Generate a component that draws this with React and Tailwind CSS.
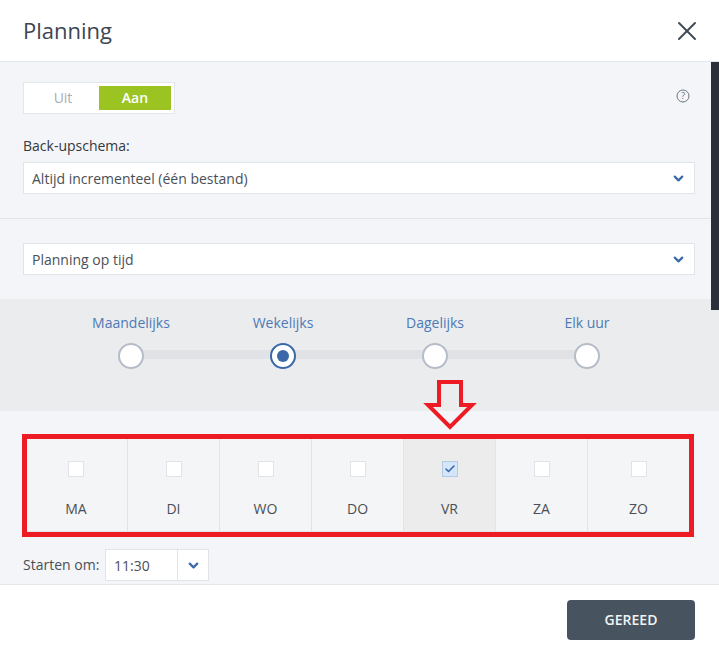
import { X, ChevronDown, Check } from "lucide-react";

const font = { fontFamily: '"Open Sans", sans-serif' };

const frequencies = [
  { label: "Maandelijks", selected: false },
  { label: "Wekelijks", selected: true },
  { label: "Dagelijks", selected: false },
  { label: "Elk uur", selected: false },
];

const days = [
  { label: "MA", width: "w-[101px] pr-[2px]" },
  { label: "DI", width: "w-[92px]" },
  { label: "WO", width: "w-[92px]" },
  { label: "DO", width: "w-[92px]" },
  { label: "VR", width: "w-[92px]", checked: true },
  { label: "ZA", width: "w-[92px]" },
  { label: "ZO", width: "flex-1" },
];

function Chevron() {
  return <ChevronDown size={15} strokeWidth={3.5} className="text-[#3b6aa8]" />;
}

function SelectBox({ value }) {
  return (
    <div className="flex h-8 items-center justify-between border border-[#e1e4e8] bg-white pl-2 pr-2 text-sm text-[#4a4f55]">
      <span className="pt-px">{value}</span>
      <Chevron />
    </div>
  );
}

export default function App() {
  return (
    <div className="relative flex h-[654px] w-[719px] flex-col overflow-hidden bg-white" style={font}>
      <header className="flex h-[62px] shrink-0 items-center justify-between border-b border-[#e1e6ed] pl-[23px] pr-4">
        <h1 className="text-[22px] text-[#3d4651]">Planning</h1>
        <X size={32} strokeWidth={1.5} className="text-[#3f4a57]" />
      </header>

      <main className="flex h-[522px] shrink-0 flex-col bg-[#f3f5f8]">
        <section className="h-[157px] shrink-0 border-b border-[#e1e4e8] pl-[23px] pr-6 pt-5">
          <div className="flex items-start justify-between pr-[5px]">
            <div className="flex h-8 w-[152px] border border-[#e3e6ea] bg-white p-[3px]">
              <span className="flex w-[72px] items-center justify-center text-sm text-[#a8acb3]">Uit</span>
              <span className="flex w-[72px] items-center justify-center bg-[#9bc423] text-sm font-semibold text-white">Aan</span>
            </div>
            <svg width="14" height="14" viewBox="0 0 14 14" className="mt-[7px] text-[#6b7480]">
              <circle cx="7" cy="7" r="6" fill="none" stroke="currentColor" />
              <text x="7" y="10.4" textAnchor="middle" fontSize="9.5" fill="currentColor" style={font}>?</text>
            </svg>
          </div>
          <div className="mt-[21px] pb-[5px] text-sm leading-[22px] text-[#33383e]">Back-upschema:</div>
          <SelectBox value="Altijd incrementeel (één bestand)" />
        </section>

        <section className="h-[80px] shrink-0 pl-[23px] pr-6 pt-6">
          <SelectBox value="Planning op tijd" />
        </section>

        <section className="h-[112px] shrink-0 bg-[#ebecee] pt-[14px]">
          <div className="relative ml-[55px] flex w-[608px]">
            <div className="absolute left-[76px] right-[76px] top-[37px] h-[9px] bg-[#e1e2e5]" />
            {frequencies.map((f) => (
              <div key={f.label} className="relative flex w-[152px] flex-col items-center">
                <span className="text-sm leading-5 text-[#4d7ab5]">{f.label}</span>
                <span
                  className={`mt-[10px] flex h-[26px] w-[26px] items-center justify-center rounded-full border-2 bg-white ${
                    f.selected ? "border-[#3a68a8]" : "border-[#b5bdc7]"
                  }`}
                >
                  {f.selected && <span className="h-3 w-3 rounded-full bg-[#3a68a8]" />}
                </span>
              </div>
            ))}
          </div>
        </section>

        <section className="shrink-0 px-[22px] pt-[23px]">
          <div className="flex h-[103px] w-[672px] border-[5px] border-[#ed1c24] bg-[#f4f5f6]">
            {days.map((d, i) => (
              <div
                key={d.label}
                className={`flex flex-col items-center border-b border-[#e3e4e6] pt-[22px] ${d.width} ${
                  i < days.length - 1 ? "border-r" : ""
                } ${d.checked ? "bg-[#ececed]" : ""}`}
              >
                {d.checked ? (
                  <span className="flex h-4 w-4 items-center justify-center border border-[#b3c9e4] bg-[#d5e5fa]">
                    <Check size={12} strokeWidth={3} className="text-[#2f62a8]" />
                  </span>
                ) : (
                  <span className="h-4 w-4 border border-[#e1e3e6] bg-white" />
                )}
                <span className="mt-[22px] text-sm leading-5 text-[#4a4f55]">{d.label}</span>
              </div>
            ))}
          </div>

          <div className="ml-px mt-3 flex items-center">
            <span className="w-[82px] text-sm text-[#4a4f55]">Starten om:</span>
            <div className="flex h-8 w-[104px] border border-[#e1e4e8] bg-white text-sm text-[#4a4f55]">
              <span className="flex w-[72px] items-center border-r border-[#e1e4e8] pl-2 pt-px">11:30</span>
              <span className="flex flex-1 items-center justify-center pl-px">
                <Chevron />
              </span>
            </div>
          </div>
        </section>
      </main>

      <footer className="flex flex-1 items-start justify-end border-t border-[#e4e6e9] pr-6 pt-[15px]">
        <button className="h-10 w-[128px] rounded bg-[#47535f] text-sm font-semibold text-[#f1f3f5]">GEREED</button>
      </footer>

      {/* scrollbar */}
      <div className="absolute right-0 top-[62px] h-[248px] w-2 bg-[#2b303a]" />

      {/* red annotation arrow */}
      <svg width="56" height="54" viewBox="0 0 56 54" className="absolute left-[422px] top-[378px]">
        <polygon
          points="17,4 39,4 39,27 50,27 28,49 6,27 17,27"
          fill="none"
          stroke="#ed1c24"
          strokeWidth="4"
          strokeLinejoin="miter"
        />
      </svg>
    </div>
  );
}
